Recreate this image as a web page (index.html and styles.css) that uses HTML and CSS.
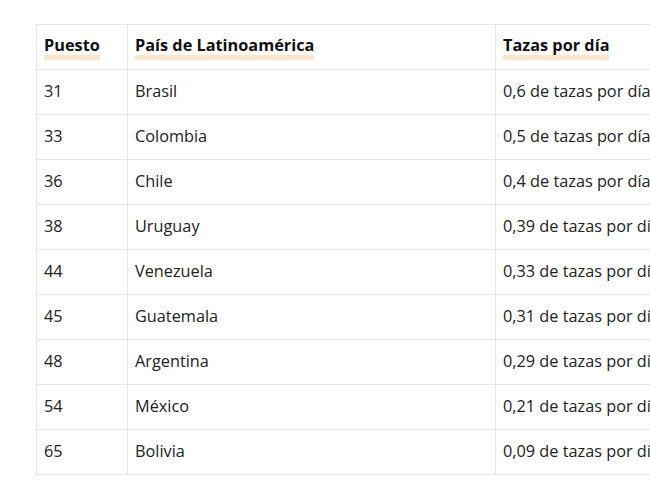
FILE: index.html
```html
<!DOCTYPE html>
<html lang="es">
<head>
<meta charset="utf-8">
<link rel="stylesheet" href="styles.css">
</head>
<body>
<div class="wrap">
<table class="ranking">
<thead>
<tr><th class="c1"><span class="hl">Puesto</span></th><th class="c2"><span class="hl">País de Latinoamérica</span></th><th class="c3"><span class="hl">Tazas por día</span></th></tr>
</thead>
<tbody>
<tr><td>31</td><td>Brasil</td><td>0,6 de tazas por día</td></tr>
<tr><td>33</td><td>Colombia</td><td>0,5 de tazas por día</td></tr>
<tr><td>36</td><td>Chile</td><td>0,4 de tazas por día</td></tr>
<tr><td>38</td><td>Uruguay</td><td>0,39 de tazas por día</td></tr>
<tr><td>44</td><td>Venezuela</td><td>0,33 de tazas por día</td></tr>
<tr><td>45</td><td>Guatemala</td><td>0,31 de tazas por día</td></tr>
<tr><td>48</td><td>Argentina</td><td>0,29 de tazas por día</td></tr>
<tr><td>54</td><td>México</td><td>0,21 de tazas por día</td></tr>
<tr><td>65</td><td>Bolivia</td><td>0,09 de tazas por día</td></tr>
</tbody>
</table>
</div>
</body>
</html>
```
FILE: styles.css
```css
html, body { margin: 0; padding: 0; background: #fff; overflow: hidden; }
.wrap { padding: 24px 0 0 36px; width: 800px; }
.ranking {
  border-collapse: collapse;
  table-layout: fixed;
  width: 700px;
  font-family: "Open Sans", sans-serif;
  font-size: 16.3px;
  color: #222;
}
.ranking th, .ranking td {
  border: 1px solid #e6e6e6;
  height: 44px;
  padding: 0 7px 2px;
  box-sizing: border-box;
  text-align: left;
  vertical-align: middle;
  white-space: nowrap;
  overflow: hidden;
}
.ranking td { height: 45px; }
.ranking th { height: 45px; font-weight: 700; color: #111; padding-bottom: 1px; }
.c1 { width: 91px; }
.c2 { width: 368px; }
.c3 { width: 241px; }
.hl {
  display: inline-block;
  line-height: 20px;
  padding-top: 2px;
  border-bottom: 5px solid #fce6ca;
}
```
